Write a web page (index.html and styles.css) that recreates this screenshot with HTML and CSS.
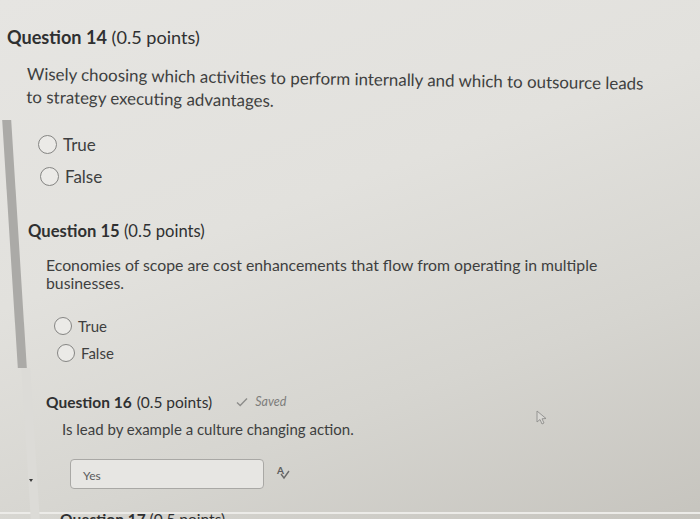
FILE: index.html
```html
<!DOCTYPE html>
<html>
<head>
<meta charset="utf-8">
<link rel="stylesheet" href="styles.css">
</head>
<body>
<div class="page">
  <div class="side-bar"></div>
  <div class="side-fade"></div>
  <span class="caret"></span>

  <section class="q q14">
    <h2 class="q-title"><b>Question 14</b> (0.5 points)</h2>
    <p class="q-text">Wisely choosing which activities to perform internally and which to outsource leads to strategy executing advantages.</p>
    <div class="opts">
      <label class="opt"><span class="radio"></span>True</label>
      <label class="opt"><span class="radio"></span>False</label>
    </div>
  </section>

  <section class="q q15">
    <h2 class="q-title"><b>Question 15</b> (0.5 points)</h2>
    <p class="q-text">Economies of scope are cost enhancements that flow from operating in multiple businesses.</p>
    <div class="opts">
      <label class="opt"><span class="radio"></span>True</label>
      <label class="opt"><span class="radio"></span>False</label>
    </div>
  </section>

  <section class="q q16">
    <h2 class="q-title"><b>Question 16</b> (0.5 points)
      <span class="saved"><svg class="check" viewBox="0 0 12 10" width="12" height="10"><path d="M1 5.5 L4.2 8.5 L11 1.5" fill="none" stroke="#8d8d8b" stroke-width="1.4"/></svg><i>Saved</i></span>
    </h2>
    <p class="q-text">Is lead by example a culture changing action.</p>
    <div class="answer-row">
      <div class="answer-box">Yes</div>
      <span class="spell"><span class="spell-a">A</span><svg class="spell-check" viewBox="0 0 10 10" width="10" height="10"><path d="M1 4 L4 8 L9 1" fill="none" stroke="#6a6a6a" stroke-width="1.4"/></svg></span>
    </div>
  </section>

  <section class="q q17">
    <h2 class="q-title"><b>Question 17</b> (0.5 points)</h2>
  </section>

  <svg class="cursor" viewBox="0 0 12 16" width="12" height="16"><path d="M1 1 L1 12 L4 9.5 L6 14 L8 13 L6 8.8 L10 8.5 Z" fill="#d9d8d4" stroke="#8e8e8c" stroke-width="0.9"/></svg>
</div>
</body>
</html>
```

FILE: styles.css
```css
* { box-sizing: border-box; }
html, body { margin: 0; padding: 0; }
body {
  width: 700px;
  height: 519px;
  overflow: hidden;
  font-family: Lato, "Open Sans", sans-serif;
  color: #3e3f40;
}
.page {
  position: relative;
  width: 700px;
  height: 519px;
  overflow: hidden;
  padding-top: 25px;
  background: linear-gradient(160deg, #e6e5e2 0%, #e2e1dd 40%, #d6d5d0 70%, #c6c4be 100%);
}
.side-bar {
  position: absolute;
  left: 10px;
  top: 120px;
  width: 9px;
  height: 248px;
  background: #abaaa7;
  transform: skewX(3.6deg);
}
.side-fade {
  position: absolute;
  left: 26px;
  top: 368px;
  width: 9px;
  height: 151px;
  background: #dcdbd7;
  transform: skewX(3.6deg);
}
.caret {
  position: absolute;
  left: 29px;
  top: 479px;
  width: 0;
  height: 0;
  border-left: 2px solid transparent;
  border-right: 2px solid transparent;
  border-top: 3px solid #3a3a3a;
}
.q-title {
  margin: 0;
  font-weight: 400;
  color: #2f3031;
}
.q-title b { font-weight: 700; }
.q-text { margin: 0; }
.opts { display: flex; flex-direction: column; }
.opt {
  display: flex;
  align-items: center;
}
.radio {
  display: inline-block;
  border-radius: 50%;
  border: 1.5px solid #858583;
  background: #ebeae7;
}

/* Question 14 */
.q14 .q-title {
  padding-left: 7px;
  font-size: 18.1px;
  line-height: 24px;
}
.q14 .q-text {
  margin: 13px 0 0 27px;
  width: 625px;
  font-size: 16.9px;
  line-height: 23px;
  transform: rotate(0.9deg);
  transform-origin: left top;
}
.q14 .opts { margin: 20px 0 0 38px; }
.q14 .opt { height: 32px; font-size: 17px; gap: 6px; }
.q14 .opt + .opt { margin-left: 2px; }
.q14 .radio { width: 19px; height: 19px; }

/* Question 15 */
.q15 .q-title {
  margin-top: 28px;
  padding-left: 28px;
  font-size: 16.6px;
  line-height: 22px;
}
.q15 .q-text {
  margin: 14px 0 0 46px;
  width: 600px;
  font-size: 15.8px;
  line-height: 18px;
}
.q15 .opts { margin: 20px 0 0 54px; }
.q15 .opt { height: 27px; font-size: 15px; gap: 6px; }
.q15 .opt + .opt { margin-left: 3px; }
.q15 .radio { width: 18px; height: 18px; }

/* Question 16 */
.q16 .q-title {
  margin-top: 26px;
  padding-left: 46px;
  font-size: 15.5px;
  line-height: 20px;
  display: flex;
  align-items: center;
  gap: 5px;
}
.saved {
  display: inline-flex;
  align-items: center;
  gap: 7px;
  margin-left: 19px;
  font-size: 12.5px;
  color: #7d7d7b;
}
.q16 .q-text {
  margin: 8px 0 0 62px;
  font-size: 15px;
  line-height: 18px;
}
.answer-row {
  display: flex;
  align-items: center;
  margin: 21px 0 0 70px;
  gap: 12px;
}
.answer-box {
  width: 194px;
  height: 30px;
  border: 1.5px solid #a9a8a5;
  border-radius: 4px;
  background: #e7e6e3;
  font-size: 12px;
  color: #5a5b5c;
  padding: 8px 0 0 12px;
}
.spell {
  position: relative;
  width: 16px;
  height: 20px;
  display: inline-block;
}
.spell-a {
  position: absolute;
  left: 1px;
  top: 0;
  font-size: 10px;
  font-weight: 700;
  color: #5c5c5c;
}
.spell-check {
  position: absolute;
  left: 4px;
  top: 6px;
}

/* Question 17 (cut off at the window edge) */
.q17 {
  margin-top: 23px;
  border-top: 2px solid #ecebe8;
}
.q17 .q-title {
  padding-left: 60px;
  font-size: 15.5px;
  line-height: 10px;
}

.cursor {
  position: absolute;
  left: 536px;
  top: 410px;
}
```
